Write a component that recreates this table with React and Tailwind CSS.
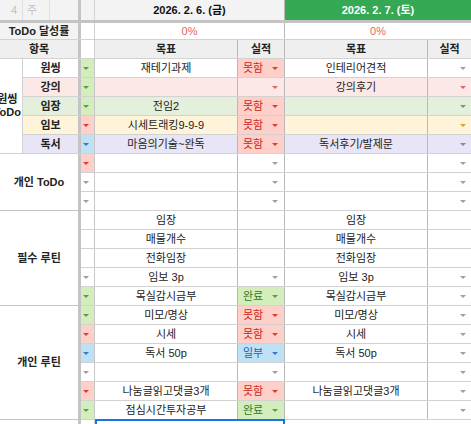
import React from "react";

const CHIP = {
  green: { bg: "bg-[#d4edbc]", tri: "#5c9e3e" },
  red: { bg: "bg-[#ffcfc9]", tri: "#de3b32" },
  blue: { bg: "bg-[#bfe1f6]", tri: "#3b78c4" },
  gray: { bg: "", tri: "#9e9e9e" },
};

const RES = {
  fail: { label: "못함", bg: "bg-[#ffcfc9]", text: "text-[#d0261e]", tri: "#de3b32" },
  done: { label: "완료", bg: "bg-[#d4edbc]", text: "text-[#2f7a2a]", tri: "#5c9e3e" },
  part: { label: "일부", bg: "bg-[#bfe1f6]", text: "text-[#1f5fae]", tri: "#3b78c4" },
};

const GRAY = "#a0a0a0";

const Tri = ({ color }) => (
  <svg width="6" height="3" viewBox="0 0 6 3" className="shrink-0">
    <path d="M0 0h6L3 3z" fill={color} />
  </svg>
);

const ChipCell = ({ chip }) => (
  <div
    className={`w-[14px] shrink-0 border-r border-[#c6c6c6] flex items-center pl-[2px] ${
      chip ? CHIP[chip].bg : ""
    }`}
  >
    {chip && <Tri color={CHIP[chip].tri} />}
  </div>
);

const ResultCell = ({ r, tri }) => {
  const res = r ? RES[r] : null;
  return (
    <div
      className={`w-[47px] shrink-0 border-r border-[#b9b9b9] flex items-center justify-between pl-[5px] pr-[6px] ${
        res ? res.bg : ""
      }`}
    >
      <span className={res ? res.text : ""}>{res ? res.label : ""}</span>
      {res ? <Tri color={res.tri} /> : tri && <Tri color={tri} />}
    </div>
  );
};

const Row = ({ bg = "", label, chip, g1, r1, t1, g2, t2 }) => (
  <div className={`flex h-[19px] border-b border-[#d2d2d2] ${bg}`}>
    {label && (
      <div className="w-[58px] shrink-0 border-r-[3px] border-[#c4c4c4] flex items-center justify-center font-bold">
        {label}
      </div>
    )}
    <ChipCell chip={chip} />
    <div className="w-[143px] shrink-0 border-r border-[#b9b9b9] flex items-center justify-center whitespace-nowrap">
      {g1}
    </div>
    <ResultCell r={r1} tri={t1} />
    <div className="w-[143px] shrink-0 border-r border-[#b9b9b9] flex items-center justify-center whitespace-nowrap">
      {g2}
    </div>
    <div className="flex-1 flex items-center justify-end pr-[5px]">
      {t2 && <Tri color={t2} />}
    </div>
  </div>
);

const Section = ({ title, height, children }) => (
  <div className="flex">
    <div
      className={`w-[81px] shrink-0 border-r-[3px] border-b border-[#c4c4c4] flex items-center justify-center font-bold ${height}`}
    >
      {title}
    </div>
    <div className="flex-1 flex flex-col">{children}</div>
  </div>
);

const App = () => {
  return (
    <div className="w-[471px] h-[424px] overflow-hidden bg-white text-[11px] leading-none text-[#222] font-['Liberation_Sans','Noto_Sans_CJK_KR',sans-serif]">
      {/* date header */}
      <div className="flex h-[23px] border-b-[3px] border-[#c4c4c4]">
        <div className="w-[23px] shrink-0 bg-[#f3f3f3] border-r border-[#e0e0e0] flex items-center justify-end pr-[5px] text-[#c2c2c2]">
          4
        </div>
        <div className="w-[27px] shrink-0 bg-[#f3f3f3] border-r border-[#e0e0e0] flex items-center pl-[4px] text-[#c2c2c2]">
          주
        </div>
        <div className="w-[31px] shrink-0 bg-[#f3f3f3] border-r-[3px] border-[#c4c4c4]" />
        <div className="w-[14px] shrink-0 bg-[#f3f3f3] border-r border-[#d2d2d2]" />
        <div className="w-[190px] shrink-0 bg-[#f3f3f3] border-r border-[#b9b9b9] flex items-center justify-center font-bold text-[#111]">
          2026. 2. 6. (금)
        </div>
        <div className="flex-1 bg-[#34a853] flex items-center justify-center font-bold text-white">
          2026. 2. 7. (토)
        </div>
      </div>

      {/* rate */}
      <div className="flex h-[17px] border-b border-[#d2d2d2]">
        <div className="w-[81px] shrink-0 bg-[#f3f3f3] border-r-[3px] border-[#c4c4c4] flex items-center justify-center font-bold">
          ToDo 달성률
        </div>
        <div className="w-[14px] shrink-0 border-r border-[#d2d2d2]" />
        <div className="w-[190px] shrink-0 border-r border-[#b9b9b9] flex items-center justify-center text-[#e06666]">
          0%
        </div>
        <div className="flex-1 flex items-center justify-center text-[#e06666]">0%</div>
      </div>

      {/* column titles */}
      <div className="flex h-[19px] border-b border-[#d2d2d2] font-bold">
        <div className="w-[81px] shrink-0 bg-[#efefef] border-r-[3px] border-[#c4c4c4] flex items-center justify-center">
          항목
        </div>
        <div className="w-[14px] shrink-0 border-r border-[#d2d2d2]" />
        <div className="w-[143px] shrink-0 bg-[#efefef] border-r border-[#b9b9b9] flex items-center justify-center">
          목표
        </div>
        <div className="w-[47px] shrink-0 bg-[#efefef] border-r border-[#b9b9b9] flex items-center justify-center">
          실적
        </div>
        <div className="w-[143px] shrink-0 bg-[#efefef] border-r border-[#b9b9b9] flex items-center justify-center">
          목표
        </div>
        <div className="flex-1 bg-[#efefef] flex items-center justify-center">실적</div>
      </div>

      {/* 원씽 ToDo */}
      <div className="flex">
        <div className="w-[23px] h-[95px] shrink-0 border-r border-b border-[#d2d2d2] overflow-hidden flex items-center justify-end font-bold">
          <div className="text-center whitespace-nowrap leading-[13px] pr-[1px]">
            원씽
            <br />
            ToDo
          </div>
        </div>
        <div className="flex-1 flex flex-col">
          <Row label="원씽" chip="green" g1="재테기과제" r1="fail" g2="인테리어견적" t2={GRAY} />
          <Row bg="bg-[#fce8e6]" label="강의" chip="green" t1="#e06666" g2="강의후기" t2="#e06666" />
          <Row bg="bg-[#e4efdc]" label="임장" chip="green" g1="전임2" r1="fail" t2="#6aa84f" />
          <Row bg="bg-[#fff4da]" label="임보" chip="red" g1="시세트래킹9-9-9" r1="fail" t2="#d9a520" />
          <Row bg="bg-[#e7e5f6]" label="독서" chip="blue" g1="마음의기술~완독" r1="fail" g2="독서후기/발제문" t2="#8e7cc3" />
        </div>
      </div>

      <Section title="개인 ToDo" height="h-[57px]">
        <Row chip="red" t1={GRAY} t2={GRAY} />
        <Row chip="gray" t1={GRAY} t2={GRAY} />
        <Row chip="gray" t1={GRAY} t2={GRAY} />
      </Section>

      <Section title="필수 루틴" height="h-[95px]">
        <Row g1="임장" g2="임장" />
        <Row g1="매물개수" g2="매물개수" />
        <Row g1="전화임장" g2="전화임장" />
        <Row chip="gray" g1="임보 3p" t1={GRAY} g2="임보 3p" t2={GRAY} />
        <Row chip="green" g1="목실감시금부" r1="done" g2="목실감시금부" t2={GRAY} />
      </Section>

      <Section title="개인 루틴" height="h-[114px]">
        <Row chip="green" g1="미모/명상" r1="fail" g2="미모/명상" t2={GRAY} />
        <Row chip="red" g1="시세" r1="fail" g2="시세" t2={GRAY} />
        <Row chip="blue" g1="독서 50p" r1="part" g2="독서 50p" t2={GRAY} />
        <Row chip="gray" t1={GRAY} t2={GRAY} />
        <Row chip="red" g1="나눔글읽고댓글3개" r1="fail" g2="나눔글읽고댓글3개" t2={GRAY} />
        <Row chip="green" g1="점심시간투자공부" r1="done" t2={GRAY} />
      </Section>

      {/* partly visible row with selection */}
      <div className="flex h-[19px]">
        <div className="w-[81px] shrink-0 border-r-[3px] border-[#c4c4c4]" />
        <div className="w-[14px] shrink-0 border-r border-[#d2d2d2]" />
        <div className="w-[190px] shrink-0 -mt-px border-2 border-[#1a73e8]" />
        <div className="flex-1" />
      </div>
    </div>
  );
};

export default App;
